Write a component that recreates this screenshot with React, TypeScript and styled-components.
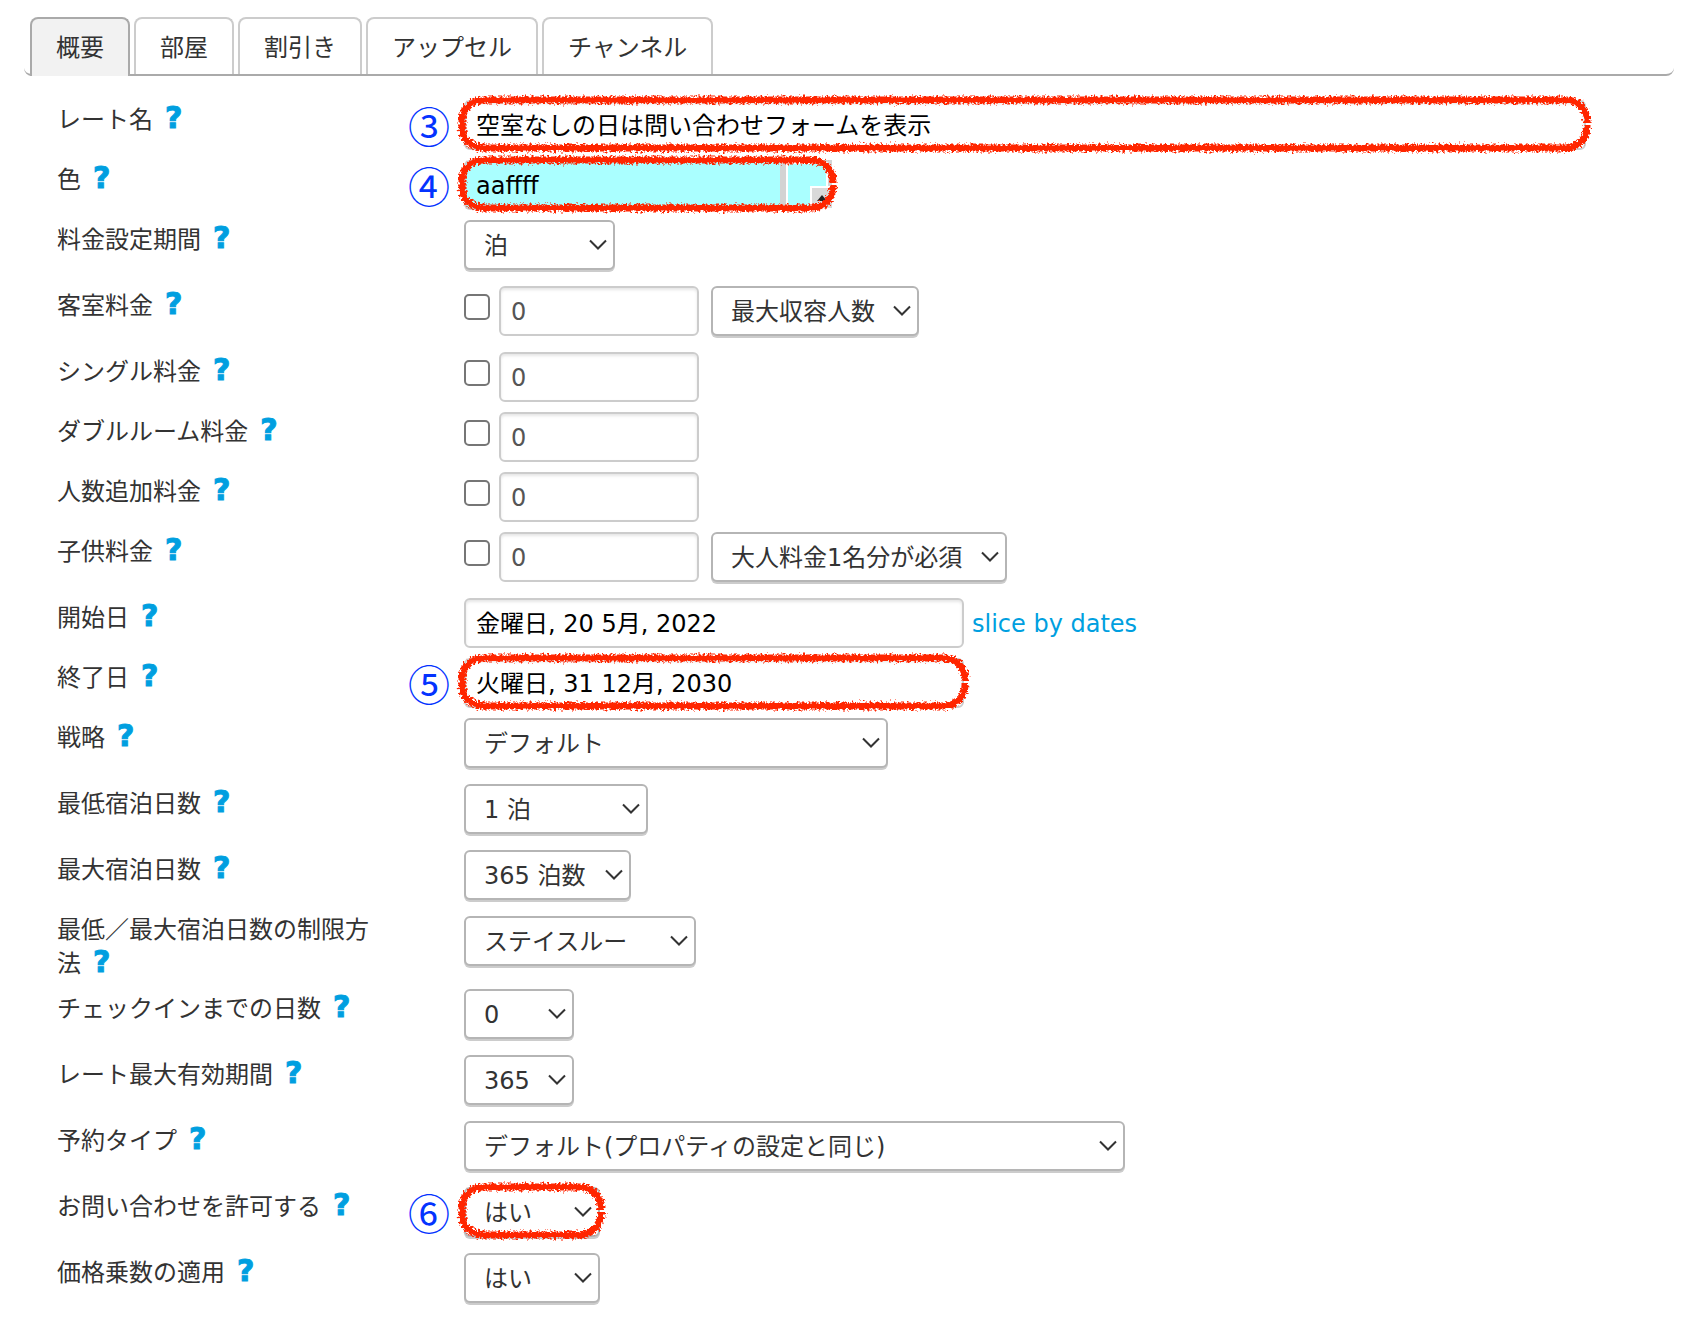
import React, { useId } from "react";
import styled, { createGlobalStyle, css } from "styled-components";

const GlobalStyle = createGlobalStyle`
  *, *::before, *::after { box-sizing: border-box; }
  body {
    margin: 0;
    background: #fff;
    color: #333;
    font: 24px/34px Verdana, "DejaVu Sans", "Noto Sans CJK JP", sans-serif;
  }
  input, select, button { font: inherit; color: inherit; margin: 0; }
`;

const Page = styled.main`
  padding: 17px 24px 14px;
`;

const TabBar = styled.nav`
  display: flex;
  gap: 4px;
  padding: 0 6px;
  border-bottom: 2px solid #aaa;
  border-radius: 8px;
`;

const Tab = styled.button<{ $active?: boolean }>`
  height: 57px;
  padding: 2px 24px 0;
  border: 2px solid ${(p) => (p.$active ? "#aaa" : "#ccc")};
  border-bottom: 0;
  border-radius: 8px 8px 0 0;
  background: ${(p) => (p.$active ? "#f2f2f2" : "#fff")};
  ${(p) => p.$active && css`
    height: 59px;
    margin-bottom: -2px;
    padding-bottom: 2px;
  `}
`;

const Form = styled.form`
  padding: 24px 88px 0 33px;
`;

const Row = styled.div<{ $tall?: boolean }>`
  display: grid;
  grid-template-columns: 335px 40px minmax(0, 1fr);
  column-gap: 16px;
  min-height: ${(p) => (p.$tall ? 66 : 60)}px;
`;

const LabelCell = styled.div`
  padding: 0 16px 10px 0;
  line-height: 28px;
`;

const Help = styled.a`
  margin-left: 12px;
  color: #009fe0;
  font-weight: 700;
  font-size: 30px;
  line-height: 35px;
  text-decoration: none;
  -webkit-text-stroke: 1px #009fe0;
`;

const Marker = styled.span`
  color: #0433ff;
  font: 42px/50px "Noto Sans CJK JP", sans-serif;
`;

const Controls = styled.div`
  display: flex;
  align-items: flex-start;
`;

const TextInput = styled.input<{ $w: string; $numeric?: boolean }>`
  width: ${(p) => p.$w};
  height: 50px;
  padding: ${(p) => (p.$numeric ? "2px 10px 0" : "0 10px 3px")};
  border: 2px solid #ccc;
  border-radius: 6px;
  background: #fff;
  box-shadow: inset 0 2px 3px rgba(0, 0, 0, 0.1);
  color: ${(p) => (p.$numeric ? "#555" : "#000")};
`;

const Check = styled.input`
  appearance: none;
  width: 26px;
  height: 26px;
  margin: 8px 9px 0 0;
  border: 2px solid #767676;
  border-radius: 5px;
  background: #fff;
`;

const SelectBox = styled.span<{ $w: number }>`
  display: grid;
  align-items: center;
  width: ${(p) => p.$w}px;
  > * { grid-area: 1 / 1; }
  > svg { justify-self: end; margin-right: 8px; pointer-events: none; }
`;

const NativeSelect = styled.select`
  appearance: none;
  width: 100%;
  height: 50px;
  padding: 2px 36px 0 18px;
  border: 2px solid #b5b5b5;
  border-radius: 6px;
  background: #fff;
  box-shadow: 0 2px 0 #ccc;
`;

const Gap = styled.span`
  width: 12px;
`;

const SliceLink = styled.a`
  margin: 9px 0 0 8px;
  color: #009fe0;
  text-decoration: none;
`;

const Highlight = styled.div<{ $fill?: boolean }>`
  position: relative;
  display: flex;
  width: ${(p) => (p.$fill ? "100%" : "auto")};
`;

const FrameSvg = styled.svg`
  position: absolute;
  top: -12px;
  left: -12px;
  width: calc(100% + 24px);
  height: calc(100% + 24px);
  pointer-events: none;
  .stroke {
    x: 10px;
    y: 12px;
    width: calc(100% - 21px);
    height: calc(100% - 26px);
  }
  .gap {
    x: calc(100% - 20px);
    y: calc(50% - 2px);
  }
`;

const ColorGroup = styled.div`
  display: flex;
  height: 50px;
`;

const ColorInput = styled.input`
  width: 316px;
  height: 50px;
  padding: 2px 10px 0;
  border: 2px solid #ccc;
  border-right: 0;
  border-radius: 6px 0 0 6px;
  background: #aaffff;
  color: #000;
`;

const Swatch = styled.button`
  display: flex;
  align-items: flex-end;
  justify-content: flex-end;
  width: 52px;
  height: 48px;
  padding: 0;
  border: 0 solid #d3d3d3;
  border-width: 2px 4px 0 6px;
  background: #aaffff;
  box-shadow: inset 0 0 0 2px #fff;
`;

const Corner = styled.span`
  display: flex;
  align-items: center;
  justify-content: center;
  width: 22px;
  height: 22px;
  margin-right: -4px;
  border: 2px solid #fff;
  border-width: 2px 0 0 2px;
  background: #d9d9d9;
`;

function CrayonFrame() {
  const id = useId();
  return (
    <FrameSvg aria-hidden="true">
      <defs>
        <filter id={id + "f"} filterUnits="userSpaceOnUse" x="0" y="0" width="100%" height="100%">
          <feTurbulence type="fractalNoise" baseFrequency="0.45" numOctaves="2" seed="7" result="n" />
          <feDisplacementMap in="SourceGraphic" in2="n" scale="8" xChannelSelector="R" yChannelSelector="G" />
        </filter>
        <mask id={id + "m"} maskUnits="userSpaceOnUse" x="0" y="0" width="100%" height="100%">
          <rect width="100%" height="100%" fill="#fff" />
          <rect className="gap" width="20" height="2" fill="#000" />
        </mask>
      </defs>
      <g mask={`url(#${id}m)`} fill="none" stroke="#ff2600">
        <rect className="stroke" rx="21" strokeWidth="7" filter={`url(#${id}f)`} />
        <rect className="stroke" rx="21" strokeWidth="4" />
      </g>
    </FrameSvg>
  );
}

function Select({ id, value, w, name }: { id?: string; value: string; w: number; name?: string }) {
  return (
    <SelectBox $w={w}>
      <NativeSelect id={id} aria-label={name} defaultValue={value}>
        <option>{value}</option>
      </NativeSelect>
      <svg width="18" height="12" viewBox="0 0 18 12" fill="none" stroke="#333" strokeWidth="2" aria-hidden="true">
        <path d="M1 1.5 L9 9.5 L17 1.5" />
      </svg>
    </SelectBox>
  );
}

type RowSpec = {
  id: string;
  label: string;
  tall?: boolean;
  marker?: string;
  control: React.ReactNode;
};

function Price({ id, label, extra, w = 0 }: { id: string; label: string; extra?: string; w?: number }) {
  return (
    <>
      <Check type="checkbox" aria-label={label} />
      <TextInput id={id} $w="200px" $numeric defaultValue="0" />
      {extra && (
        <>
          <Gap />
          <Select name={label} value={extra} w={w} />
        </>
      )}
    </>
  );
}

const rows: RowSpec[] = [
  {
    id: "name", label: "レート名", marker: "③",
    control: (
      <Highlight $fill>
        <TextInput id="name" $w="100%" defaultValue="空室なしの日は問い合わせフォームを表示" />
        <CrayonFrame />
      </Highlight>
    ),
  },
  {
    id: "color", label: "色", marker: "④",
    control: (
      <Highlight>
        <ColorGroup>
          <ColorInput id="color" defaultValue="aaffff" />
          <Swatch type="button" aria-label="色">
            <Corner>
              <svg width="10" height="6" viewBox="0 0 10 6" aria-hidden="true"><path d="M5 0 L10 6 H0 Z" fill="#222" /></svg>
            </Corner>
          </Swatch>
        </ColorGroup>
        <CrayonFrame />
      </Highlight>
    ),
  },
  { id: "period", label: "料金設定期間", tall: true, control: <Select id="period" value="泊" w={151} /> },
  { id: "room", label: "客室料金", tall: true, control: <Price id="room" label="客室料金" extra="最大収容人数" w={208} /> },
  { id: "single", label: "シングル料金", control: <Price id="single" label="シングル料金" /> },
  { id: "double", label: "ダブルルーム料金", control: <Price id="double" label="ダブルルーム料金" /> },
  { id: "extra", label: "人数追加料金", control: <Price id="extra" label="人数追加料金" /> },
  { id: "child", label: "子供料金", tall: true, control: <Price id="child" label="子供料金" extra="大人料金1名分が必須" w={296} /> },
  {
    id: "start", label: "開始日",
    control: (
      <>
        <TextInput id="start" $w="500px" defaultValue="金曜日, 20 5月, 2022" />
        <SliceLink href="#slice">slice by dates</SliceLink>
      </>
    ),
  },
  {
    id: "end", label: "終了日", marker: "⑤",
    control: (
      <Highlight>
        <TextInput id="end" $w="500px" defaultValue="火曜日, 31 12月, 2030" />
        <CrayonFrame />
      </Highlight>
    ),
  },
  { id: "strategy", label: "戦略", tall: true, control: <Select id="strategy" value="デフォルト" w={424} /> },
  { id: "min", label: "最低宿泊日数", tall: true, control: <Select id="min" value="1 泊" w={184} /> },
  { id: "max", label: "最大宿泊日数", tall: true, control: <Select id="max" value="365 泊数" w={167} /> },
  { id: "rule", label: "最低／最大宿泊日数の制限方法", tall: true, control: <Select id="rule" value="ステイスルー" w={232} /> },
  { id: "lead", label: "チェックインまでの日数", tall: true, control: <Select id="lead" value="0" w={110} /> },
  { id: "valid", label: "レート最大有効期間", tall: true, control: <Select id="valid" value="365" w={110} /> },
  { id: "type", label: "予約タイプ", tall: true, control: <Select id="type" value="デフォルト(プロパティの設定と同じ)" w={661} /> },
  {
    id: "inquiry", label: "お問い合わせを許可する", tall: true, marker: "⑥",
    control: (
      <Highlight>
        <Select id="inquiry" value="はい" w={136} />
        <CrayonFrame />
      </Highlight>
    ),
  },
  { id: "multiplier", label: "価格乗数の適用", control: <Select id="multiplier" value="はい" w={136} /> },
];

const tabs = ["概要", "部屋", "割引き", "アップセル", "チャンネル"];

export default function App() {
  return (
    <>
      <GlobalStyle />
      <Page lang="ja">
        <TabBar>
          {tabs.map((t, i) => (
            <Tab key={t} type="button" $active={i === 0}>{t}</Tab>
          ))}
        </TabBar>
        <Form>
          {rows.map((r) => (
            <Row key={r.id} $tall={r.tall}>
              <LabelCell>
                <label htmlFor={r.id}>{r.label}</label>
                <Help href={"#help-" + r.id}>?</Help>
              </LabelCell>
              <Marker>{r.marker}</Marker>
              <Controls>{r.control}</Controls>
            </Row>
          ))}
        </Form>
      </Page>
    </>
  );
}
